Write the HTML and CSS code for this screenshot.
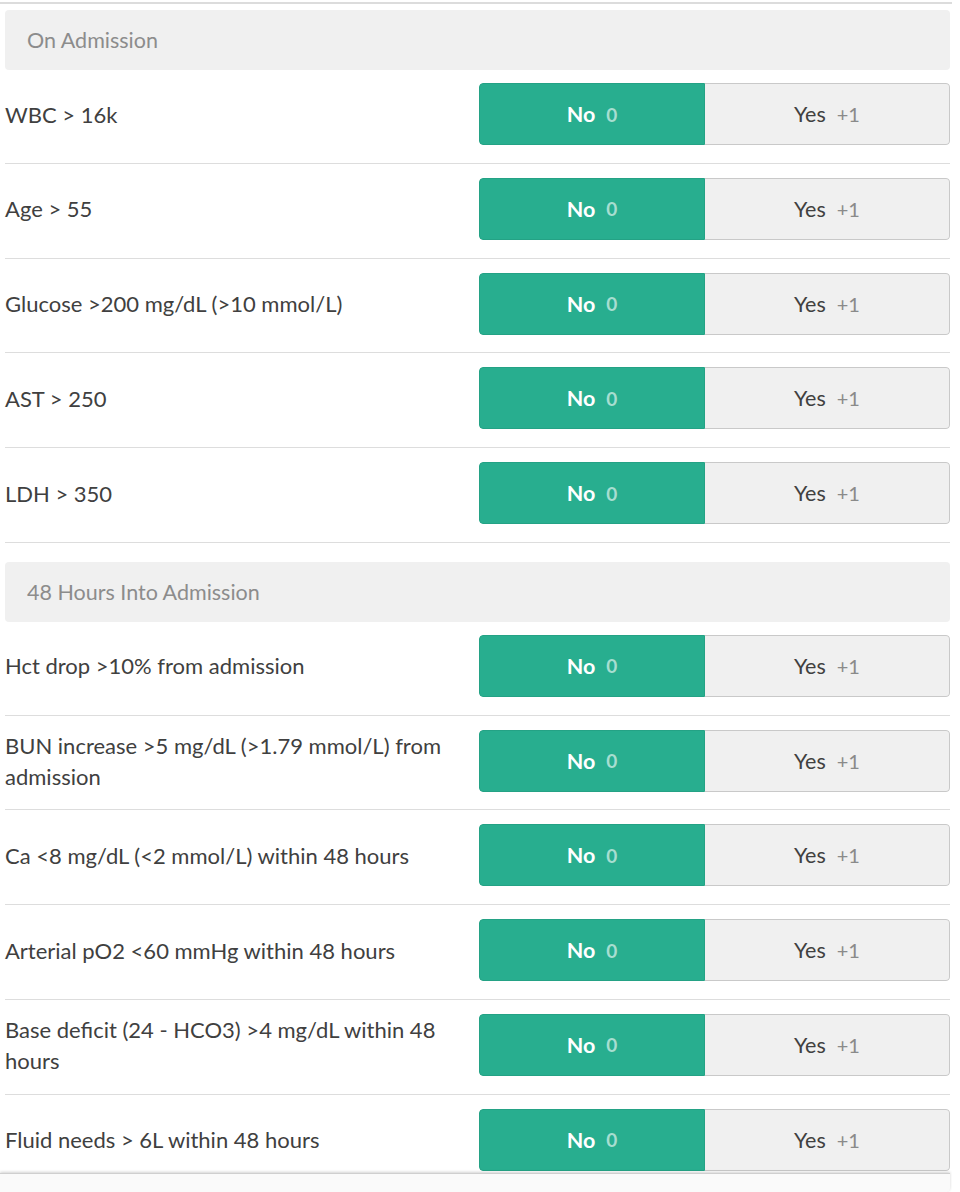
FILE: index.html
```html
<!DOCTYPE html>
<html>
<head>
<meta charset="utf-8">
<link rel="stylesheet" href="styles.css">
</head>
<body>
<div class="calc">
  <div class="section">
    <div class="section-title">On Admission</div>
    <div class="row"><div class="label">WBC &gt; 16k</div><div class="toggle"><div class="opt on">No <span class="pts">0</span></div><div class="opt">Yes <span class="pts">+1</span></div></div></div>
    <div class="row"><div class="label">Age &gt; 55</div><div class="toggle"><div class="opt on">No <span class="pts">0</span></div><div class="opt">Yes <span class="pts">+1</span></div></div></div>
    <div class="row"><div class="label">Glucose &gt;200 mg/dL (&gt;10 mmol/L)</div><div class="toggle"><div class="opt on">No <span class="pts">0</span></div><div class="opt">Yes <span class="pts">+1</span></div></div></div>
    <div class="row"><div class="label">AST &gt; 250</div><div class="toggle"><div class="opt on">No <span class="pts">0</span></div><div class="opt">Yes <span class="pts">+1</span></div></div></div>
    <div class="row"><div class="label">LDH &gt; 350</div><div class="toggle"><div class="opt on">No <span class="pts">0</span></div><div class="opt">Yes <span class="pts">+1</span></div></div></div>
  </div>
  <div class="section">
    <div class="section-title">48 Hours Into Admission</div>
    <div class="row"><div class="label">Hct drop &gt;10% from admission</div><div class="toggle"><div class="opt on">No <span class="pts">0</span></div><div class="opt">Yes <span class="pts">+1</span></div></div></div>
    <div class="row"><div class="label">BUN increase &gt;5 mg/dL (&gt;1.79 mmol/L) from admission</div><div class="toggle"><div class="opt on">No <span class="pts">0</span></div><div class="opt">Yes <span class="pts">+1</span></div></div></div>
    <div class="row"><div class="label">Ca &lt;8 mg/dL (&lt;2 mmol/L) within 48 hours</div><div class="toggle"><div class="opt on">No <span class="pts">0</span></div><div class="opt">Yes <span class="pts">+1</span></div></div></div>
    <div class="row"><div class="label">Arterial pO2 &lt;60 mmHg within 48 hours</div><div class="toggle"><div class="opt on">No <span class="pts">0</span></div><div class="opt">Yes <span class="pts">+1</span></div></div></div>
    <div class="row"><div class="label">Base deficit (24 - HCO3) &gt;4 mg/dL within 48 hours</div><div class="toggle"><div class="opt on">No <span class="pts">0</span></div><div class="opt">Yes <span class="pts">+1</span></div></div></div>
    <div class="row last"><div class="label">Fluid needs &gt; 6L within 48 hours</div><div class="toggle"><div class="opt on">No <span class="pts">0</span></div><div class="opt">Yes <span class="pts">+1</span></div></div></div>
  </div>
  <div class="footer"></div>
</div>
</body>
</html>
```

FILE: styles.css
```css
html, body {
  margin: 0;
  padding: 0;
  background: #ffffff;
}
body {
  font-family: Lato, "Noto Sans", sans-serif;
  color: #404040;
}
.calc {
  width: 952px;
  margin-top: 2px;
  border-top: 2px solid #dcdcdc;
  padding-top: 6px;
  height: 1182px;
  overflow: hidden;
  display: flex;
  flex-direction: column;
}
.section {
  margin-left: 5px;
  width: 945px;
}
.section + .section {
  margin-top: 19px;
}
.section-title {
  background: #f0f0f0;
  border-radius: 4px;
  height: 60px;
  display: flex;
  align-items: center;
  padding-left: 22px;
  font-size: 21.5px;
  color: #8c8c8c;
}
.row {
  display: flex;
  align-items: center;
  padding: 13px 0 17.75px;
  border-bottom: 1px solid #dddddd;
  min-height: 62px;
}
.row + .row {
  padding-top: 14px;
}
.row.last {
  border-bottom: none;
  padding-bottom: 2px;
}
.label {
  width: 452px;
  margin-right: 22px;
  font-size: 22px;
  line-height: 31px;
  color: #404040;
}
.toggle {
  display: flex;
  height: 62px;
  width: 471px;
  border-radius: 4px;
  overflow: hidden;
  box-sizing: border-box;
}
.opt {
  display: flex;
  align-items: center;
  justify-content: center;
  gap: 11px;
  box-sizing: border-box;
  width: 245px;
  background: #f0f0f0;
  border: 1px solid #c9c9c9;
  border-left: none;
  border-radius: 0 4px 4px 0;
  font-size: 21.5px;
  color: #404040;
}
.opt .pts {
  font-size: 20px;
  color: #8a8a8a;
}
.opt.on {
  width: 226px;
  background: #28ae8f;
  border: 1px solid #24a285;
  border-radius: 4px 0 0 4px;
  color: #ffffff;
  font-weight: 700;
}
.opt.on .pts {
  color: rgba(255, 255, 255, 0.6);
  font-size: 19px;
}
.footer {
  height: 30px;
  background: #fafafa;
  border-top: 1px solid #cfcfcf;
  box-shadow: 0 -1px 3px rgba(0, 0, 0, 0.18);
  margin-right: 2px;
  border-radius: 0 0 4px 0;
}
```
